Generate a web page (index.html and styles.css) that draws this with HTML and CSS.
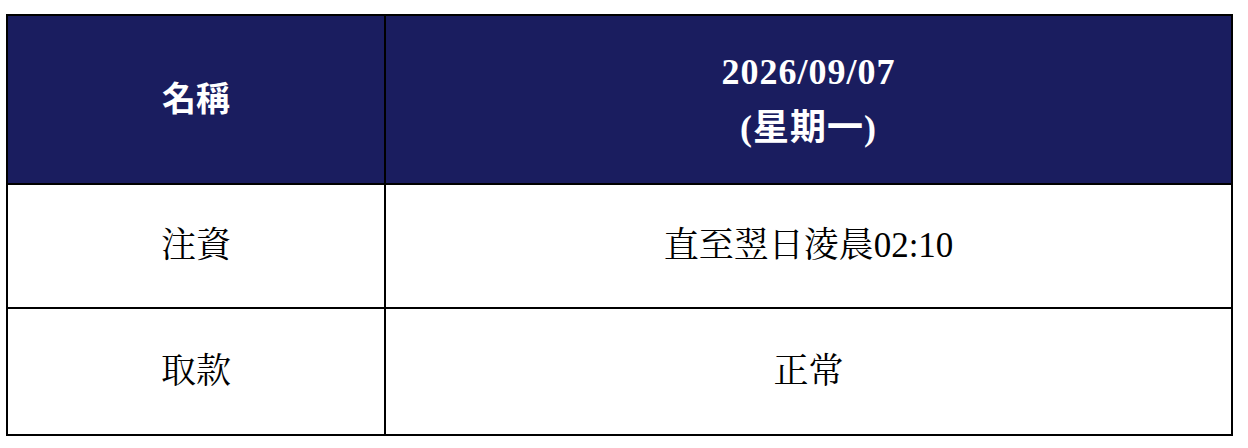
FILE: index.html
```html
<!DOCTYPE html>
<html lang="zh-Hant">
<head>
<meta charset="utf-8">
<link rel="stylesheet" href="styles.css">
</head>
<body>
<table class="schedule">
  <colgroup>
    <col class="col-name">
    <col class="col-value">
  </colgroup>
  <thead>
    <tr class="head-row">
      <th class="head-cell head-name">名稱</th>
      <th class="head-cell head-date">2026/09/07<br>(星期一)</th>
    </tr>
  </thead>
  <tbody>
    <tr class="body-row row-deposit">
      <td class="cell">注資</td>
      <td class="cell">直至翌日淩晨02:10</td>
    </tr>
    <tr class="body-row row-withdraw">
      <td class="cell">取款</td>
      <td class="cell">正常</td>
    </tr>
  </tbody>
</table>
</body>
</html>
```

FILE: styles.css
```css
html, body {
  background: #ffffff;
}
body {
  margin: 14px 0 0 6px;
  font-family: "Liberation Serif", "Noto Serif CJK TC", "Noto Sans CJK TC", serif;
  color: #000000;
}
.schedule {
  border-collapse: collapse;
  table-layout: fixed;
  width: 1227px;
}
.col-name {
  width: 378px;
}
.head-cell,
.cell {
  border: 2px solid #000000;
  text-align: center;
  vertical-align: middle;
  padding: 0;
  font-weight: normal;
}
.cell {
  font-size: 35px;
  line-height: 42px;
}
.head-cell {
  background: #1a1d5f;
  color: #ffffff;
  height: 167px;
  font-family: "Liberation Serif", "Noto Sans CJK TC", sans-serif;
  font-weight: bold;
  font-size: 34px;
  line-height: 42px;
}
.head-date {
  font-size: 36px;
  line-height: 56px;
  letter-spacing: 1px;
}
.row-deposit .cell {
  height: 122px;
}
.row-withdraw .cell {
  height: 125px;
}
```
